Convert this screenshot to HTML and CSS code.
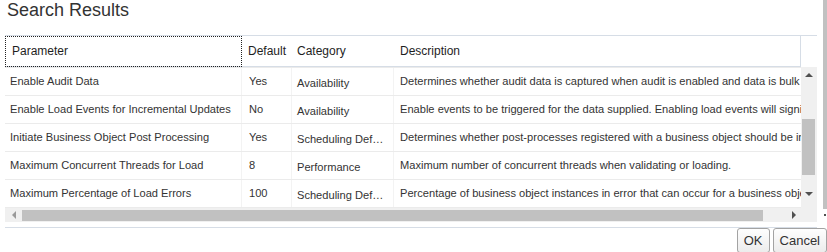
FILE: index.html
```html
<!DOCTYPE html>
<html lang="en">

<head>
	<meta charset="UTF-8">
	<meta name="viewport" content="width=device-width, initial-scale=1.0">
	<title>Search Results</title>
	<link rel="stylesheet" href="styles.css">
</head>

<body>
	<h1 class="title">Search Results</h1>

	<div class="grid">
		<div class="head">
			<div class="hcell c-param focused">Parameter</div>
			<div class="hcell c-default">Default</div>
			<div class="hcell c-cat">Category</div>
			<div class="hcell c-desc">Description</div>
			<div class="hfill"></div>
		</div>

		<div class="body">
			<div class="rows">
				<div class="row">
					<div class="cell c-param">Enable Audit Data</div>
					<div class="cell c-default">Yes</div>
					<div class="cell c-cat">Availability</div>
					<div class="cell c-desc">Determines whether audit data is captured when audit is enabled and data is bulk loaded into the system.</div>
				</div>
				<div class="row">
					<div class="cell c-param">Enable Load Events for Incremental Updates</div>
					<div class="cell c-default">No</div>
					<div class="cell c-cat">Availability</div>
					<div class="cell c-desc">Enable events to be triggered for the data supplied. Enabling load events will significantly impact performance.</div>
				</div>
				<div class="row">
					<div class="cell c-param">Initiate Business Object Post Processing</div>
					<div class="cell c-default">Yes</div>
					<div class="cell c-cat">Scheduling Definition</div>
					<div class="cell c-desc">Determines whether post-processes registered with a business object should be initiated after loading.</div>
				</div>
				<div class="row">
					<div class="cell c-param">Maximum Concurrent Threads for Load</div>
					<div class="cell c-default">8</div>
					<div class="cell c-cat">Performance</div>
					<div class="cell c-desc">Maximum number of concurrent threads when validating or loading.</div>
				</div>
				<div class="row">
					<div class="cell c-param">Maximum Percentage of Load Errors</div>
					<div class="cell c-default">100</div>
					<div class="cell c-cat">Scheduling Definition</div>
					<div class="cell c-desc">Percentage of business object instances in error that can occur for a business object before the load stops.</div>
				</div>
			</div>

			<div class="vscroll">
				<div class="vbtn"><span class="arrow up"></span></div>
				<div class="vgap-top"></div>
				<div class="vthumb"></div>
				<div class="vgap-bottom"></div>
				<div class="vbtn"><span class="arrow down"></span></div>
			</div>
		</div>

		<div class="hbar">
			<div class="hscroll">
				<div class="hbtn hbtn-left"><span class="arrow left"></span></div>
				<div class="hthumb"></div>
				<div class="htrack"></div>
				<div class="hbtn hbtn-right"><span class="arrow right"></span></div>
			</div>
			<div class="corner"></div>
		</div>
	</div>

	<div class="footer">
		<button class="btn">OK</button>
		<button class="btn">Cancel</button>
	</div>

	<div class="page-scroll"></div>
</body>

</html>
```

FILE: styles.css
```css
* {
	margin: 0;
	padding: 0;
	box-sizing: border-box;
}

html,
body {
	height: 100%;
	overflow: hidden;
}

body {
	background: #fff;
	padding-left: 5px;
	font-family: 'Liberation Sans', Arial, sans-serif;
	font-size: 11.1px;
	color: #333;
}

.title {
	font-size: 18px;
	font-weight: normal;
	line-height: 21px;
	color: #333;
	padding-left: 2px;
}

.grid {
	width: 812px;
	margin-top: 14px;
	border-top: 1px solid #d6dde6;
	border-bottom: 1px solid #d6dde6;
	padding-bottom: 5px;
}

/* column widths shared by header and rows */
.c-param {
	width: 237px;
}

.c-default {
	width: 50px;
}

.c-cat {
	width: 102px;
}

.c-desc {
	width: 407px;
}

.head {
	display: flex;
	height: 31px;
}

.hcell {
	display: flex;
	align-items: center;
	padding-left: 6px;
	border-bottom: 1px solid #d6dde6;
	font-size: 12px;
	color: #1e1e1e;
	white-space: nowrap;
}

.hcell.c-param {
	padding-left: 7px;
}

.hcell.c-cat {
	padding-left: 5px;
}

.hcell.c-desc {
	border-right: 1px solid #d6dde6;
}

.focused {
	outline: 1px dotted #222;
	outline-offset: -1px;
}

.hfill {
	width: 16px;
}

.body {
	display: flex;
	height: 141px;
}

.rows {
	width: 796px;
	overflow: hidden;
	border-bottom: 1px solid #ebebeb;
}

.row {
	display: flex;
	height: 28px;
	border-top: 1px solid #ebebeb;
}

.cell {
	line-height: 27px;
	padding: 0 6px;
	white-space: nowrap;
	overflow: hidden;
	border-right: 1px solid #f3f3f3;
}

.cell.c-param {
	padding-left: 5px;
}

.cell.c-default {
	padding-left: 7px;
}

.cell.c-cat {
	padding: 3px 8px 0 5px;
	line-height: 25px;
	text-overflow: ellipsis;
}

.cell.c-desc {
	border-right: 0;
	text-overflow: clip;
}

/* scrollbars */
.vscroll {
	width: 16px;
	background: #f0f0f0;
	display: flex;
	flex-direction: column;
}

.vbtn {
	height: 16px;
	display: flex;
	align-items: center;
	justify-content: center;
}

.vgap-top {
	height: 36px;
}

.vthumb {
	height: 56px;
	margin: 0 2px 0 1px;
	background: #c1c1c1;
}

.vgap-bottom {
	height: 11px;
}

.hbar {
	display: flex;
	height: 14px;
}

.hscroll {
	width: 796px;
	display: flex;
	background: #f0f0f0;
}

.hbtn {
	display: flex;
	align-items: center;
	justify-content: center;
}

.hbtn-left {
	width: 17px;
}

.hbtn-right {
	width: 15px;
}

.hthumb {
	width: 741px;
	margin: 2px 0 1px;
	background: #c1c1c1;
}

.htrack {
	flex: 1;
}

.corner {
	width: 16px;
	background: #f0f0f0;
}

.arrow {
	width: 0;
	height: 0;
	border: 4px solid transparent;
}

.arrow.up {
	border-top: 0;
	border-bottom: 4px solid #505050;
}

.arrow.down {
	border-bottom: 0;
	border-top: 4px solid #505050;
}

.arrow.left {
	border-left: 0;
	border-right: 4px solid #9a9a9a;
}

.arrow.right {
	border-right: 0;
	border-left: 4px solid #505050;
}

.footer {
	display: flex;
	justify-content: flex-end;
	gap: 3px;
}

.btn {
	height: 25px;
	padding: 0 6px;
	font-family: inherit;
	font-size: 13px;
	color: #333;
	background: linear-gradient(#fefefe, #ececec);
	border: 1px solid #a3a3a3;
	border-radius: 3px;
}

.page-scroll {
	position: fixed;
	top: 0;
	right: 0;
	width: 4px;
	height: 209px;
	background: #c1c1c1;
}

.page-scroll::after {
	content: '';
	position: absolute;
	top: 214px;
	left: 1px;
	width: 2px;
	height: 2px;
	background: #505050;
}
```
